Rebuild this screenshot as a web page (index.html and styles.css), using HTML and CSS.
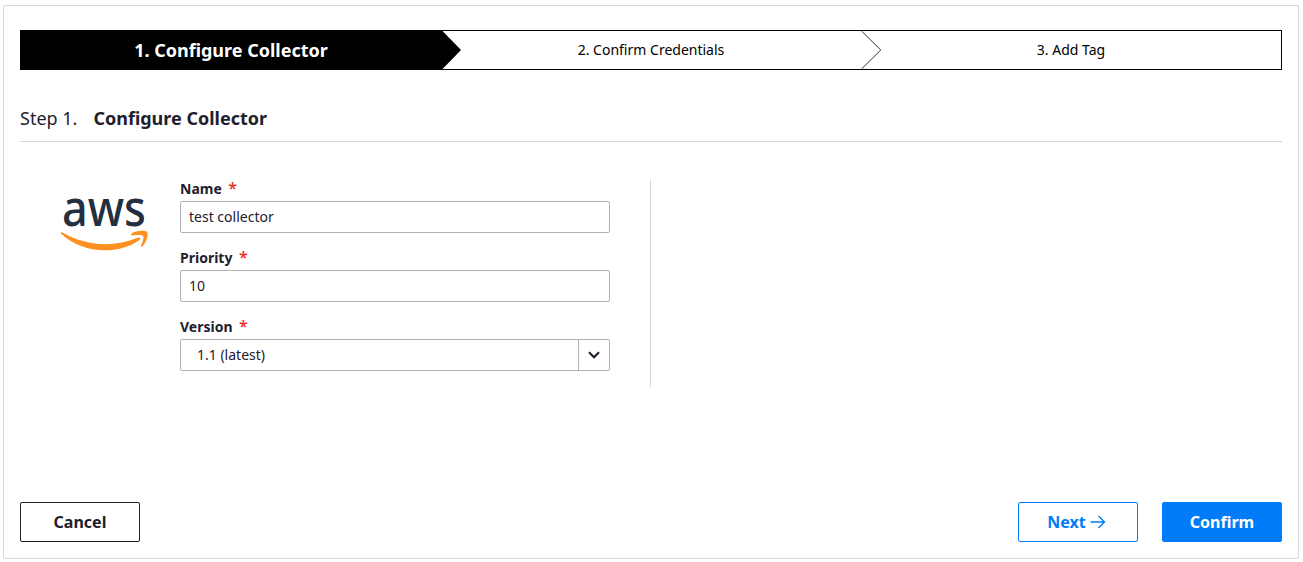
FILE: index.html
```html
<!DOCTYPE html>
<html lang="en">
<head>
<meta charset="utf-8">
<title>Configure Collector</title>
<link rel="stylesheet" href="styles.css">
</head>
<body>
<main class="card">
  <ol class="stepper">
    <li class="step active">1. Configure Collector
      <svg class="arrow" width="21" height="38" viewBox="0 0 21 38"><path d="M0 0h1.500l18.500 19L1.500 38H0z" fill="#000"/></svg>
    </li>
    <li class="step">2. Confirm Credentials
      <svg class="arrow" width="21" height="38" viewBox="0 0 21 38"><path d="M.5 0 19.800 19 .5 38" fill="none" stroke="#000" stroke-width=".8"/></svg>
    </li>
    <li class="step">3. Add Tag</li>
  </ol>
  <h1 class="title"><span class="title-step">Step 1.</span>Configure Collector</h1>
  <section class="content">
    <svg class="logo" width="90" height="90" viewBox="0 -28 90 90" role="img" aria-label="aws">
      <text class="logo-text" x="2" y="36" textLength="84" lengthAdjust="spacingAndGlyphs">aws</text>
      <path d="M1 43.500C.2 42.500 1.400 41.900 2.500 42.500 27 56.500 54 57.500 77.500 47.800c2.200-.9 3.700 1 1.800 2.400C57 65.500 21.500 63.500 1 43.500z" fill="#ff9020"/>
      <path d="M71.500 43.500c4.500-3.400 14.300-3.400 15.800-1.600 1.300 2-.7 10.500-5 14.600-.8.700-1.700.3-1.300-.6 1.100-2.700 3.300-8.600 2.200-9.900-1.200-1.400-7.700-.9-10.800-.5-1.300.2-1.900-1.100-.9-2z" fill="#ff9020"/>
    </svg>
    <form class="form">
      <div class="field">
        <label class="label" for="name">Name<span class="required">*</span></label>
        <input class="input" id="name" type="text" value="test collector">
      </div>
      <div class="field">
        <label class="label" for="priority">Priority<span class="required">*</span></label>
        <input class="input" id="priority" type="text" value="10">
      </div>
      <div class="field">
        <span class="label">Version<span class="required">*</span></span>
        <div class="select">
          <span class="select-value">1.1 (latest)</span>
          <span class="select-toggle"><svg width="14" height="10" viewBox="0 0 14 10"><path d="M2 2.200 7 7.200l5-5" fill="none" stroke="#1f202d" stroke-width="2.200"/></svg></span>
        </div>
      </div>
    </form>
    <div class="divider"></div>
  </section>
  <footer class="actions">
    <button class="button cancel">Cancel</button>
    <button class="button next">Next<svg class="next-icon" width="16" height="14" viewBox="0 0 16 14"><path d="M.5 7h14M8.500 1l6 6-6 6" fill="none" stroke="#007bf9" stroke-width="1.400"/></svg></button>
    <button class="button confirm">Confirm</button>
  </footer>
</main>
</body>
</html>
```
FILE: styles.css
```css
* { box-sizing: border-box; }
body {
  margin: 0;
  padding: 5px 4px 3px 3px;
  background: #fff;
  color: #1f202d;
  font: 14px/20px "Noto Sans", sans-serif;
}
.card {
  display: flex;
  flex-direction: column;
  height: 554px;
  padding: 24px 16px 16px;
  border: 1px solid #d6d6da;
  border-radius: 2px;
}
.stepper {
  display: grid;
  grid-template-columns: repeat(3, 1fr);
  height: 40px;
  margin: 0;
  padding: 0;
  border: 1px solid #000;
  list-style: none;
  color: #000;
}
.step {
  position: relative;
  display: flex;
  align-items: center;
  justify-content: center;
}
.step.active {
  background: #000;
  color: #fff;
  font-size: 18px;
  font-weight: 700;
}
.arrow {
  position: absolute;
  top: 0;
  left: 100%;
}
.title {
  display: flex;
  gap: 16px;
  height: 72px;
  margin: 0;
  padding-top: 36px;
  border-bottom: 1px solid #d6d6d6;
  font-size: 18px;
  line-height: 24px;
  font-weight: 700;
}
.title-step { font-weight: 400; }
.content {
  display: flex;
  padding: 38px 0 0 40px;
}
.logo {
  margin: -18px 30px 0 0;
}
.logo-text {
  font: 500 50px "Noto Sans", sans-serif;
  fill: #232f3e;
}
.form {
  display: flex;
  flex-direction: column;
  gap: 16px;
  width: 430px;
}
.label {
  display: flex;
  height: 21px;
  font-weight: 700;
  line-height: 18px;
}
.required {
  margin-left: 6.500px;
  color: #f0281a;
  font-size: 16px;
  font-weight: 500;
  line-height: 16px;
}
.input, .select {
  display: flex;
  width: 100%;
  height: 32px;
  border: 1px solid #b0b0b8;
  border-radius: 2px;
  background: #fff;
  color: inherit;
  font: inherit;
}
.input { padding: 0 8px 2px; }
.select-value {
  flex: 1;
  padding-left: 16px;
  line-height: 30px;
}
.select-toggle {
  display: flex;
  align-items: center;
  justify-content: center;
  width: 31px;
  border-left: 1px solid #b0b0b8;
}
.divider {
  width: 1px;
  height: 207px;
  margin-left: 40px;
  background: #d6d6da;
}
.actions {
  display: flex;
  gap: 24px;
  margin-top: auto;
}
.button {
  display: flex;
  align-items: center;
  justify-content: center;
  width: 120px;
  height: 40px;
  padding: 0;
  border: 1px solid #1f202d;
  border-radius: 2px;
  background: #fff;
  color: #1f202d;
  font: 700 16px "Noto Sans", sans-serif;
}
.cancel { margin-right: auto; }
.next {
  padding-right: 3px;
  border-color: #007bf9;
  color: #007bf9;
}
.next-icon { margin-left: 4px; }
.confirm {
  border-color: #007bf9;
  background: #007bf9;
  color: #fff;
}
```
